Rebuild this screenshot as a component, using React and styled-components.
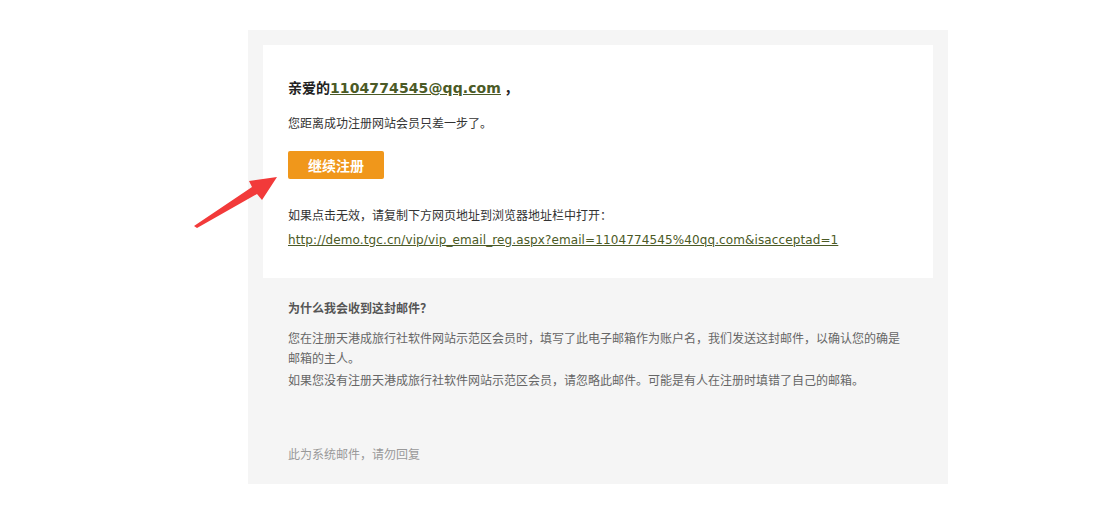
import React from 'react';
import styled, { createGlobalStyle } from 'styled-components';

const GlobalStyle = createGlobalStyle`
  html, body {
    margin: 0;
    padding: 0;
    background: #fff;
  }
  body {
    font-family: "Noto Sans CJK SC", "DejaVu Sans", sans-serif;
    font-size: 12px;
    color: #333;
  }
`;

const Page = styled.div`
  position: relative;
  width: 1110px;
  height: 512px;
  padding: 30px 0 0 248px;
  box-sizing: border-box;
`;

const Mail = styled.div`
  width: 700px;
  background: #f5f5f5;
  padding: 15px 15px 0;
  box-sizing: border-box;
`;

const Card = styled.div`
  background: #fff;
  padding: 30px 25px 27px;
`;

const Greeting = styled.h1`
  margin: 0;
  height: 24px;
  font-size: 14px;
  line-height: 24px;
  font-weight: bold;
  color: #222;
`;

const MailLink = styled.a`
  font-family: "DejaVu Sans", "Noto Sans CJK SC", sans-serif;
  color: #4b5a26;
  text-decoration: underline;
  line-height: 1;
  font-size: ${(p) => (p.$big ? '14px' : '12px')};
  font-weight: ${(p) => (p.$big ? 'bold' : 'normal')};
  letter-spacing: ${(p) => (p.$big ? '0.1px' : '0.11px')};
`;

const Text = styled.p`
  margin: ${(p) => p.$mt || 0}px 0 0;
  font-size: 12px;
  line-height: ${(p) => p.$lh || 20}px;
  color: ${(p) => p.$color || '#333'};
`;

const Button = styled.a`
  display: flex;
  align-items: center;
  justify-content: center;
  width: 96px;
  height: 28px;
  margin-top: 18px;
  background: #f0971b;
  border-radius: 2px;
  color: #fff;
  font-size: 14px;
  font-weight: bold;
  text-decoration: none;
`;

const Notes = styled.div`
  padding: 20px 25px 20px;
`;

const NoteTitle = styled.h2`
  margin: 0;
  font-size: 12px;
  line-height: 20px;
  font-weight: bold;
  color: #555;
`;

const Arrow = styled.svg`
  position: absolute;
  left: 0;
  top: 0;
  pointer-events: none;
`;

const App = () => (
  <>
    <GlobalStyle />
    <Page>
      <Mail>
        <Card>
          <Greeting>
            亲爱的<MailLink $big href="#">1104774545@qq.com</MailLink>&nbsp;，
          </Greeting>
          <Text $mt={14}>您距离成功注册网站会员只差一步了。</Text>
          <Button href="#">继续注册</Button>
          <Text $mt={24} $lh={24}>如果点击无效，请复制下方网页地址到浏览器地址栏中打开：</Text>
          <Text $lh={24}>
            <MailLink href="#">http://demo.tgc.cn/vip/vip_email_reg.aspx?email=1104774545%40qq.com&amp;isacceptad=1</MailLink>
          </Text>
        </Card>
        <Notes>
          <NoteTitle>为什么我会收到这封邮件？</NoteTitle>
          <Text $mt={10} $color="#666">
            您在注册天港成旅行社软件网站示范区会员时，填写了此电子邮箱作为账户名，我们发送这封邮件，以确认您的确是邮箱的主人。
          </Text>
          <Text $mt={2} $color="#666">
            如果您没有注册天港成旅行社软件网站示范区会员，请忽略此邮件。可能是有人在注册时填错了自己的邮箱。
          </Text>
          <Text $mt={54} $color="#999">此为系统邮件，请勿回复</Text>
        </Notes>
      </Mail>
      <Arrow width="1110" height="512" viewBox="0 0 1110 512">
        <polygon
          points="194,226 252,187 249,181 277,177 262,200 257,194 197,228"
          fill="#f23a3a"
        />
      </Arrow>
    </Page>
  </>
);

export default App;
